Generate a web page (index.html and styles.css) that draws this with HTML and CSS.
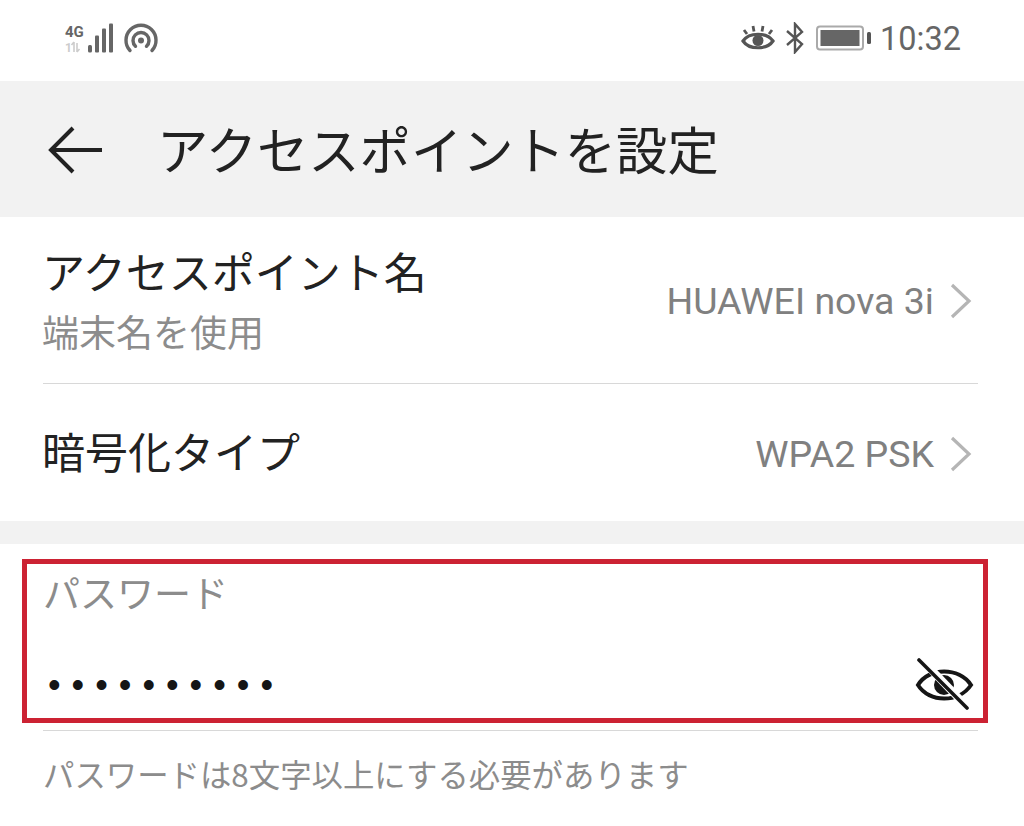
FILE: index.html
```html
<!DOCTYPE html>
<html lang="ja">
<head>
  <meta charset="UTF-8">
  <title>アクセスポイントを設定</title>
  <link rel="stylesheet" href="styles.css">
</head>
<body>

<!-- STATUS BAR -->
<div class="status-bar">
  <div class="status-left">
    <svg class="net-icon" width="50" height="34" viewBox="0 0 50 34">
      <text x="1" y="15.500" class="net-4g">4G</text>
      <text x="1" y="31" class="net-1">1</text>
      <path d="M10 21v10M7.500 24l2.500-3M13 22v9M13 31l2.500-3" stroke="#ccc" stroke-width="1.600" fill="none"/>
      <rect x="24" y="24" width="4" height="7.500" rx="1.500" fill="#666"/>
      <rect x="31" y="14.500" width="4" height="17" rx="1" fill="#666"/>
      <rect x="38" y="7.500" width="4" height="24" rx="1" fill="#666"/>
      <rect x="45" y="2.500" width="4" height="29" rx="1" fill="#666"/>
    </svg>
    <svg class="hotspot-icon" width="34" height="34" viewBox="0 0 34 34">
      <path d="M6 29.500A15 15 0 1 1 28 29.500" fill="none" stroke="#666" stroke-width="3.400" stroke-linecap="round"/>
      <path d="M11.500 25.300A8 8 0 1 1 22.500 25.300" fill="none" stroke="#666" stroke-width="3.400" stroke-linecap="round"/>
      <circle cx="17" cy="19.500" r="3" fill="#666"/>
    </svg>
  </div>
  <div class="status-right">
    <svg class="status-eye" width="34" height="28" viewBox="0 0 34 28">
      <path d="M2 17C8 8 26 8 32 17C26 26 8 26 2 17Z" fill="none" stroke="#555" stroke-width="3.200"/>
      <circle cx="17" cy="16.500" r="5.500" fill="#555"/>
      <path d="M6 10L3 6M13 7.500L12 2M21 7.500L22 2M28 10L31 6" stroke="#555" stroke-width="2.800" fill="none"/>
    </svg>
    <svg width="22" height="32" viewBox="0 0 22 32">
      <path d="M3 9L18 22L11 30V2L18 10L3 23" fill="none" stroke="#555" stroke-width="2.400"/>
    </svg>
    <svg class="battery" width="56" height="26" viewBox="0 0 56 26">
      <rect x="1" y="1.500" width="46" height="23" rx="3" fill="none" stroke="#aaa" stroke-width="2"/>
      <rect x="4.500" y="5" width="39" height="16" fill="#666"/>
      <rect x="51" y="7" width="4" height="12" rx="1.500" fill="#555"/>
    </svg>
    <span class="time">10:32</span>
  </div>
</div>

<!-- HEADER -->
<div class="header">
  <svg class="back" width="56" height="50" viewBox="0 0 56 50">
    <path d="M54 25H4M25 3L3 25L25 47" fill="none" stroke="#222" stroke-width="4"/>
  </svg>
  <h1>アクセスポイントを設定</h1>
</div>

<!-- SETTINGS -->
<div class="row row-name">
  <div>
    <div class="row-title">アクセスポイント名</div>
    <div class="row-sub">端末名を使用</div>
  </div>
  <div class="row-value">HUAWEI nova 3i
    <svg class="chevron" width="24" height="38" viewBox="0 0 24 38"><path d="M3 3L20 19L3 35" fill="none" stroke="#b5b5b5" stroke-width="3.200"/></svg>
  </div>
</div>
<div class="row row-type">
  <div class="row-title">暗号化タイプ</div>
  <div class="row-value">WPA2 PSK
    <svg class="chevron" width="24" height="38" viewBox="0 0 24 38"><path d="M3 3L20 19L3 35" fill="none" stroke="#b5b5b5" stroke-width="3.200"/></svg>
  </div>
</div>

<div class="gap"></div>

<!-- PASSWORD -->
<div class="password-section">
  <div class="password-box">
    <div class="password-label">パスワード</div>
    <div class="password-field">
      <span class="dots">••••••••••</span>
      <svg class="eye-off" width="60" height="54" viewBox="0 0 60 54">
        <path d="M3 27C14 9 44 9 56 27C44 45 14 45 3 27Z" fill="none" stroke="#151515" stroke-width="4"/>
        <circle cx="29" cy="27" r="10" fill="#151515"/>
        <path d="M7 2L55 52" stroke="#fff" stroke-width="8" fill="none"/>
        <path d="M4 2L52 50" stroke="#151515" stroke-width="3.600" stroke-linecap="round" fill="none"/>
      </svg>
    </div>
  </div>
  <div class="password-line"></div>
  <div class="hint">パスワードは8文字以上にする必要があります</div>
</div>

</body>
</html>
```

FILE: styles.css
```css
body {
  margin: 0;
  background: white;
  font-family: "Noto Sans CJK JP", "Roboto", sans-serif;
  color: #222;
  overflow: hidden;
}

.status-bar {
  height: 81px;
  display: flex;
  justify-content: space-between;
  align-items: center;
  padding: 0 63px 6px 64px;
  box-sizing: border-box;
}

.status-left, .status-right {
  display: flex;
  align-items: center;
}

.status-left {
  gap: 10px;
}

.status-right {
  gap: 8px;
}

.status-eye {
  margin-right: 1px;
}

.battery {
  margin-left: 2px;
}

.net-4g {
  font: bold 15px "Roboto", sans-serif;
  fill: #666;
}

.net-1 {
  font: bold 12px "Roboto", sans-serif;
  fill: #ccc;
}

.time {
  font-family: "Roboto", sans-serif;
  font-size: 32.500px;
  line-height: 40px;
  padding-top: 2px;
  color: #666;
}

.header {
  height: 136px;
  background: #f2f2f2;
  display: flex;
  align-items: center;
  padding: 0 0 4px 48px;
  box-sizing: border-box;
}

.back {
  margin: 6px 53px 0 0;
}

h1 {
  margin: 0;
  font-size: 51.300px;
  font-weight: 400;
}

.row {
  display: flex;
  justify-content: space-between;
  align-items: center;
  margin: 0 46px 0 43px;
  box-sizing: border-box;
}

.row-name {
  height: 167px;
  padding-bottom: 4px;
  border-bottom: 1px solid #d8d8d8;
}

.row-type {
  height: 137px;
  padding-bottom: 6px;
}

.row-title {
  font-size: 43px;
  line-height: 60px;
  margin-left: -1px;
}

.row-sub {
  font-size: 37px;
  line-height: 50px;
  margin: 6px 0 0 -1px;
  color: #8c8c8c;
}

.row-value {
  display: flex;
  align-items: center;
  gap: 15px;
  margin: 6px 5px 0 0;
  font-family: "Roboto", sans-serif;
  font-size: 37.500px;
  color: #808080;
}

.row-type .row-value {
  margin-top: 9px;
}

.gap {
  height: 23px;
  background: #f2f2f2;
}

.password-section {
  padding-top: 15px;
}

.password-box {
  margin: 0 36px 0 22px;
  height: 164px;
  border: 5px solid #cc2233;
  box-sizing: border-box;
  padding: 3px 8px 0 16px;
}

.password-label {
  font-size: 37px;
  line-height: 50px;
  color: #8c8c8c;
}

.password-field {
  display: flex;
  justify-content: space-between;
  align-items: center;
  margin-top: 41px;
  height: 54px;
}

.dots {
  font-family: "Liberation Sans", sans-serif;
  font-size: 36px;
  letter-spacing: 11px;
  margin-left: 5px;
  color: #151515;
}

.password-line {
  margin: 7px 46px 0 43px;
  height: 1px;
  background: #d8d8d8;
}

.hint {
  margin: 20px 0 0 43px;
  font-size: 31.400px;
  line-height: 46px;
  color: #8c8c8c;
}
```
